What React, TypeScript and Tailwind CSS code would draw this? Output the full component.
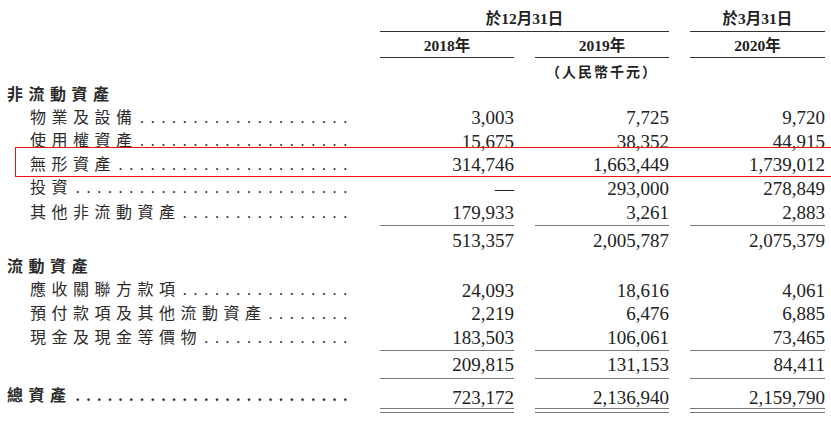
import React from 'react';

type Vals = [string, string, string];

const serif = "font-['Liberation_Serif','Noto_Sans_CJK_TC',serif]";
const grid = 'grid grid-cols-[359px_134px_134px_135px] gap-x-[21px]';

const Leader = () => (
  <span className="flex min-w-0 flex-1 justify-end overflow-hidden whitespace-nowrap">
    <span className="shrink-0 tracking-[6.7px]">{'.'.repeat(40)}</span>
  </span>
);

const Label = ({ text, bold, dots }: { text: string; bold?: boolean; dots?: boolean }) => (
  <div className={`flex items-center pr-[5px] ${bold ? 'pl-[7px] font-bold' : 'pl-[30px]'}`}>
    <div className="flex w-full items-baseline text-[16px] leading-none text-[#2b2b2b]">
      <span className="shrink-0 tracking-[5.5px]">{text}</span>
      {dots && <Leader />}
    </div>
  </div>
);

const Num = ({ v, line }: { v: string; line?: boolean }) => (
  <div
    className={`flex items-center justify-end text-[19px] leading-none text-[#222] ${line ? 'border-b border-[#7a7a7a]' : ''}`}
  >
    {v}
  </div>
);

const Row = ({
  label,
  v,
  h,
  bold,
  line,
}: {
  label: string;
  v?: Vals;
  h: string;
  bold?: boolean;
  line?: boolean;
}) => (
  <div className={`${grid} ${h}`}>
    <Label text={label} bold={bold} dots={!!v && !!label} />
    {v ? v.map((x, i) => <Num key={i} v={x} line={line} />) : null}
  </div>
);

export default function App() {
  return (
    <div className={`relative h-[423px] w-[831px] overflow-hidden bg-white ${serif}`}>
      {/* header */}
      <div className={`${grid} h-[32px] text-[15.5px] font-bold leading-none text-[#222]`}>
        <div />
        <div className="col-span-2 flex items-center justify-center border-b border-[#333] pt-[7px]">
          於12月31日
        </div>
        <div className="flex items-center justify-center border-b border-[#333] pt-[7px]">於3月31日</div>
      </div>
      <div className={`${grid} h-[26px] text-[15.5px] font-bold leading-none text-[#222]`}>
        <div />
        {['2018年', '2019年', '2020年'].map((y) => (
          <div key={y} className="flex items-center justify-center border-b border-[#333] pt-[3px]">
            {y}
          </div>
        ))}
      </div>
      <div className={`${grid} h-[26px] text-[14px] font-bold leading-none text-[#222]`}>
        <div />
        <div />
        <div className="flex items-center justify-center pt-[4px] tracking-[2px]">（人民幣千元）</div>
        <div />
      </div>

      <Row label="非流動資產" h="h-[22px]" bold />
      <Row label="物業及設備" v={['3,003', '7,725', '9,720']} h="h-[23.5px]" />
      <Row label="使用權資產" v={['15,675', '38,352', '44,915']} h="h-[23.5px]" />
      <div className="relative">
        <Row label="無形資產" v={['314,746', '1,663,449', '1,739,012']} h="h-[23.5px]" />
        <div className="absolute -top-[6px] bottom-0 left-[15px] right-0 border-y border-l border-[#ee1111]" />
      </div>
      <Row label="投資" v={['—', '293,000', '278,849']} h="h-[23.5px]" />
      <Row label="其他非流動資產" v={['179,933', '3,261', '2,883']} h="h-[26px]" line />
      <Row label="" v={['513,357', '2,005,787', '2,075,379']} h="h-[29px]" />

      <Row label="流動資產" h="h-[23.5px]" bold />
      <Row label="應收關聯方款項" v={['24,093', '18,616', '4,061']} h="h-[23.5px]" />
      <Row label="預付款項及其他流動資產" v={['2,219', '6,476', '6,885']} h="h-[23.5px]" />
      <Row label="現金及現金等價物" v={['183,503', '106,061', '73,465']} h="h-[25px]" line />
      <div className={`${grid} h-[28.5px]`}>
        <div />
        {['209,815', '131,153', '84,411'].map((x) => (
          <Num key={x} v={x} line />
        ))}
      </div>

      <div className={grid}>
        <Label text="總資產" bold dots />
        {['723,172', '2,136,940', '2,159,790'].map((x) => (
          <div key={x} className="border-b border-[#7a7a7a] pb-[3px]">
            <div className="flex h-[30px] items-center justify-end border-b border-[#7a7a7a] pt-[8px] text-[19px] leading-none text-[#222]">
              {x}
            </div>
          </div>
        ))}
      </div>
    </div>
  );
}
